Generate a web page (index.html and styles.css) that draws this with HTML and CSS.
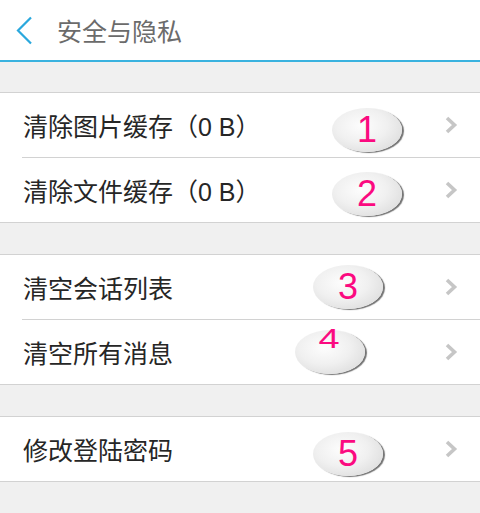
FILE: index.html
```html
<!DOCTYPE html>
<html lang="zh">
<head>
<meta charset="utf-8">
<title>安全与隐私</title>
<link rel="stylesheet" href="styles.css">
</head>
<body>
<header class="topbar">
  <svg class="back" width="18" height="29" viewBox="0 0 18 29"><polyline points="16,1.5 3,14.5 16,27.5" fill="none" stroke="#2aa8dd" stroke-width="2.2"/></svg>
  <span class="title">安全与隐私</span>
</header>
<main class="content">
  <section class="group">
    <div class="row"><span class="label">清除图片缓存（0 B）</span><span class="badge b1"><span class="num">1</span></span><svg class="chev" width="14" height="18" viewBox="0 0 14 18"><polyline points="3,2 10.5,9 3,16" fill="none" stroke="#c6c6c6" stroke-width="3.6"/></svg></div>
    <div class="row"><span class="label">清除文件缓存（0 B）</span><span class="badge b2"><span class="num">2</span></span><svg class="chev" width="14" height="18" viewBox="0 0 14 18"><polyline points="3,2 10.5,9 3,16" fill="none" stroke="#c6c6c6" stroke-width="3.6"/></svg></div>
  </section>
  <section class="group">
    <div class="row"><span class="label">清空会话列表</span><span class="badge b3"><span class="num">3</span></span><svg class="chev" width="14" height="18" viewBox="0 0 14 18"><polyline points="3,2 10.5,9 3,16" fill="none" stroke="#c6c6c6" stroke-width="3.6"/></svg></div>
    <div class="row"><span class="label">清空所有消息</span><span class="badge b4"><span class="num n4">4</span></span><svg class="chev" width="14" height="18" viewBox="0 0 14 18"><polyline points="3,2 10.5,9 3,16" fill="none" stroke="#c6c6c6" stroke-width="3.6"/></svg></div>
  </section>
  <section class="group">
    <div class="row"><span class="label">修改登陆密码</span><span class="badge b5"><span class="num">5</span></span><svg class="chev" width="14" height="18" viewBox="0 0 14 18"><polyline points="3,2 10.5,9 3,16" fill="none" stroke="#c6c6c6" stroke-width="3.6"/></svg></div>
  </section>
</main>
</body>
</html>
```
FILE: styles.css
```css
html, body {
  margin: 0;
  padding: 0;
}
body {
  background: #f0f0f0;
  font-family: "Liberation Sans", "Noto Sans CJK SC", sans-serif;
  width: 480px;
  height: 513px;
  overflow: hidden;
}
.topbar {
  height: 60px;
  background: #fff;
  border-bottom: 2px solid #3ab2df;
  display: flex;
  align-items: center;
}
.back {
  margin-left: 15px;
  display: block;
}
.title {
  margin-left: 24px;
  font-size: 25px;
  color: #6b6b6b;
  font-family: "Noto Sans CJK SC", sans-serif;
}
.content {
  padding-top: 30px;
  display: flex;
  flex-direction: column;
  gap: 31px;
}
.group {
  background: #fff;
  border-top: 1px solid #d2d2d2;
  border-bottom: 1px solid #d2d2d2;
}
.row {
  position: relative;
  height: 64px;
  display: flex;
  align-items: center;
  padding-left: 23px;
  padding-right: 22px;
}
.row + .row {
  border-top: 1px solid #d2d2d2;
}
.row + .row::before {
  content: "";
  position: absolute;
  left: 0;
  top: -1px;
  width: 22px;
  height: 1px;
  background: #fff;
}
.label {
  flex: 1;
  font-size: 25px;
  color: #262626;
}
.chev {
  display: block;
}
.badge {
  position: absolute;
  width: 70px;
  height: 44px;
  border-radius: 50%;
  background: radial-gradient(ellipse at 42% 40%, #fdfdfd 0%, #f0f0f0 45%, #dcdcdc 85%, #cfcfcf 100%);
  box-shadow: 2px 1px 1px rgba(0, 0, 0, 0.55);
  display: flex;
  align-items: center;
  justify-content: center;
}
.num {
  font-family: "Liberation Sans", sans-serif;
  font-size: 36px;
  line-height: 1;
  color: #fb0a80;
}
.n4 {
  font-size: 38px;
  position: relative;
  top: -14px;
  left: -1px;
  transform: scaleY(0.74);
}
.b1 { left: 332px; top: 15px; }
.b2 { left: 332px; top: 14px; }
.b3 { left: 313px; top: 10px; }
.b4 { left: 295px; top: 10px; }
.b5 { left: 313px; top: 15px; }
```
